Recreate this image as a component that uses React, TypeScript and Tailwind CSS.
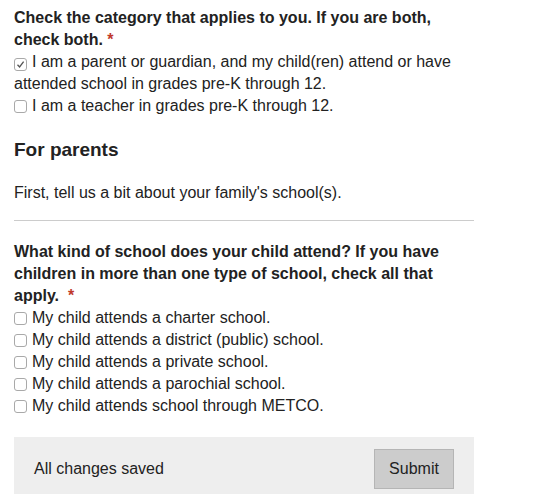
import React from "react";

function Box({ checked }: { checked?: boolean }) {
  return (
    <span className="inline-flex w-[13px] h-[13px] mr-[5px] align-[-2px] rounded-[3px] border border-[#a9a9a9] bg-white items-center justify-center shrink-0">
      {checked && (
        <svg width="9" height="9" viewBox="0 0 9 9">
          <path d="M1.5 4.8 L3.6 7 L7.6 1.6" fill="none" stroke="#555" strokeWidth="1.3" />
        </svg>
      )}
    </span>
  );
}

function Option({ label, checked }: { label: string; checked?: boolean }) {
  return (
    <div className="leading-[22px]">
      <Box checked={checked} />
      {label}
    </div>
  );
}

export default function App() {
  return (
    <div
      className="w-[460px] ml-[14px] text-[16px] text-[#222] bg-white"
      style={{ fontFamily: '"Liberation Sans", Arial, sans-serif' }}
    >
      <div className="pt-[7px] font-bold leading-[22px]">
        Check the category that applies to you. If you are both, check both.{" "}
        <span className="text-[#c0392b]">*</span>
      </div>
      <Option
        checked
        label="I am a parent or guardian, and my child(ren) attend or have attended school in grades pre-K through 12."
      />
      <Option label="I am a teacher in grades pre-K through 12." />

      <h2 className="mt-[21px] text-[19px] font-bold leading-[24px]">For parents</h2>
      <p className="mt-[20px] leading-[22px]">First, tell us a bit about your family's school(s).</p>
      <hr className="mt-[16px] border-0 border-t border-[#cccccc]" />

      <div className="mt-[20px] font-bold leading-[22px]">
        What kind of school does your child attend? If you have children in more than one type of school, check all that apply.{"\u00a0 "}
        <span className="text-[#c0392b]">*</span>
      </div>
      <Option label="My child attends a charter school." />
      <Option label="My child attends a district (public) school." />
      <Option label="My child attends a private school." />
      <Option label="My child attends a parochial school." />
      <Option label="My child attends school through METCO." />

      <div className="mt-[20px] bg-[#eeeeee] pl-[20px] pr-[20px] py-[12px] flex items-center justify-between">
        <span>All changes saved</span>
        <button className="w-[80px] h-[40px] bg-[#cccccc] border border-[#b5b5b5] text-[16px] text-[#222]">
          Submit
        </button>
      </div>
    </div>
  );
}
